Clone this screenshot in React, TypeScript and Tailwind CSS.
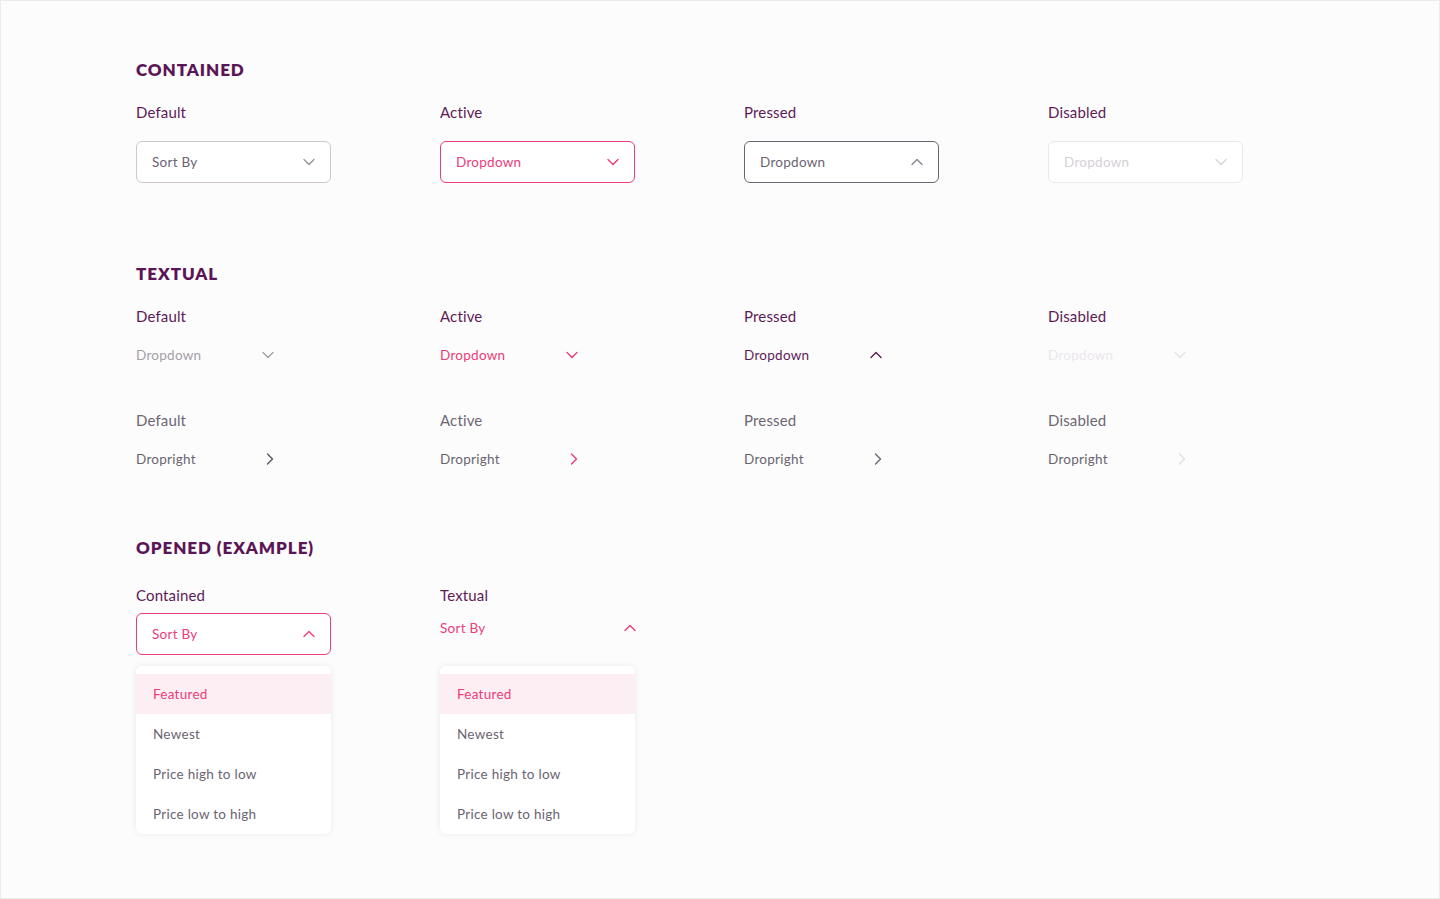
import React from "react";

const FONT = { fontFamily: "Lato, 'Open Sans', sans-serif" };

type ChevronDir = "down" | "up" | "right";

const Chevron: React.FC<{ dir: ChevronDir; className?: string }> = ({ dir, className }) => {
  const d =
    dir === "down" ? "M1 1.5l5 5 5-5" : dir === "up" ? "M1 6.5l5-5 5 5" : "M1.5 1l5 5-5 5";
  const w = dir === "right" ? 8 : 12;
  const h = dir === "right" ? 12 : 8;
  return (
    <svg width={w} height={h} viewBox={`0 0 ${w} ${h}`} fill="none" className={className}>
      <path d={d} stroke="currentColor" strokeWidth="1.4" strokeLinecap="round" strokeLinejoin="round" />
    </svg>
  );
};

const SectionTitle: React.FC<{ children: React.ReactNode }> = ({ children }) => (
  <h2 className="text-[17px] leading-6 font-extrabold tracking-[0.055em] text-[#5b1557]">{children}</h2>
);

const Label: React.FC<{ children: React.ReactNode; muted?: boolean }> = ({ children, muted }) => (
  <div className={`text-[15px] leading-5 tracking-[0.01em] ${muted ? "text-[#6e6673]" : "text-[#5e1a57]"}`}>
    {children}
  </div>
);

interface BoxProps {
  text: string;
  state: "default" | "active" | "pressed" | "disabled";
  open?: boolean;
}

const ContainedBox: React.FC<BoxProps> = ({ text, state, open }) => {
  const styles = {
    default: "border-[#cfc6d0] text-[#6b6470]",
    active: "border-[#ec3c7a] text-[#ec3c7a]",
    pressed: "border-[#6b6470] text-[#6b6470]",
    disabled: "border-[#ebe8ec] text-[#d5d0d7]",
  }[state];
  const chevronColor = {
    default: "text-[#9b939e]",
    active: "text-[#ec3c7a]",
    pressed: "text-[#8c8490]",
    disabled: "text-[#d9d4db]",
  }[state];
  return (
    <div
      className={`flex h-[42px] w-[195px] items-center justify-between rounded-[6px] border bg-white pl-[15px] pr-[15px] text-[13.5px] tracking-[0.02em] ${styles}`}
    >
      <span>{text}</span>
      <Chevron dir={state === "pressed" || open ? "up" : "down"} className={chevronColor} />
    </div>
  );
};

const TextualRow: React.FC<{ text: string; dir: ChevronDir; textColor: string; iconColor: string; width?: string }> = ({
  text,
  dir,
  textColor,
  iconColor,
  width = "w-[138px]",
}) => (
  <div className={`flex h-5 items-center justify-between text-[13.5px] tracking-[0.02em] ${width}`}>
    <span className={textColor}>{text}</span>
    <Chevron dir={dir} className={iconColor} />
  </div>
);

const Menu: React.FC = () => {
  const items = ["Featured", "Newest", "Price high to low", "Price low to high"];
  return (
    <div className="w-[195px] overflow-hidden rounded-[6px] bg-white pt-2 shadow-[0_0_6px_rgba(0,0,0,0.08)]">
      {items.map((item, i) => (
        <div
          key={item}
          className={`flex h-10 items-center pl-[17px] text-[13.5px] tracking-[0.02em] ${
            i === 0 ? "bg-[#fdeef3] text-[#ec3c7a]" : "text-[#6b6470]"
          }`}
        >
          {item}
        </div>
      ))}
    </div>
  );
};

export default function App() {
  return (
    <div
      style={FONT}
      className="min-h-[899px] w-[1440px] border border-[#ececec] bg-[#fcfcfc] pl-[135px] pt-[57px]"
    >
      <SectionTitle>CONTAINED</SectionTitle>
      <div className="mt-5 grid grid-cols-[304px_304px_304px_304px]">
        {(
          [
            ["Default", "Sort By", "default"],
            ["Active", "Dropdown", "active"],
            ["Pressed", "Dropdown", "pressed"],
            ["Disabled", "Dropdown", "disabled"],
          ] as const
        ).map(([label, text, state]) => (
          <div key={label} className="flex flex-col gap-[19px]">
            <Label>{label}</Label>
            <ContainedBox text={text} state={state} />
          </div>
        ))}
      </div>

      <div className="mt-[79px]">
        <SectionTitle>TEXTUAL</SectionTitle>
      </div>
      <div className="mt-5 grid grid-cols-[304px_304px_304px_304px]">
        <div className="flex flex-col gap-[19px]">
          <Label>Default</Label>
          <TextualRow text="Dropdown" dir="down" textColor="text-[#a59ea8]" iconColor="text-[#a59ea8]" />
        </div>
        <div className="flex flex-col gap-[19px]">
          <Label>Active</Label>
          <TextualRow text="Dropdown" dir="down" textColor="text-[#ec3c7a]" iconColor="text-[#ec3c7a]" />
        </div>
        <div className="flex flex-col gap-[19px]">
          <Label>Pressed</Label>
          <TextualRow text="Dropdown" dir="up" textColor="text-[#5e1a57]" iconColor="text-[#5e1a57]" />
        </div>
        <div className="flex flex-col gap-[19px]">
          <Label>Disabled</Label>
          <TextualRow text="Dropdown" dir="down" textColor="text-[#ebe7ec]" iconColor="text-[#e6e2e7]" />
        </div>
      </div>
      <div className="mt-[45px] grid grid-cols-[304px_304px_304px_304px]">
        <div className="flex flex-col gap-[19px]">
          <Label muted>Default</Label>
          <TextualRow text="Dropright" dir="right" textColor="text-[#6b6470]" iconColor="text-[#5c5460]" />
        </div>
        <div className="flex flex-col gap-[19px]">
          <Label muted>Active</Label>
          <TextualRow text="Dropright" dir="right" textColor="text-[#6b6470]" iconColor="text-[#ec3c7a]" />
        </div>
        <div className="flex flex-col gap-[19px]">
          <Label muted>Pressed</Label>
          <TextualRow text="Dropright" dir="right" textColor="text-[#6b6470]" iconColor="text-[#6b6470]" />
        </div>
        <div className="flex flex-col gap-[19px]">
          <Label muted>Disabled</Label>
          <TextualRow text="Dropright" dir="right" textColor="text-[#6b6470]" iconColor="text-[#e2dee3]" />
        </div>
      </div>

      <div className="mt-[67px]">
        <SectionTitle>OPENED (EXAMPLE)</SectionTitle>
      </div>
      <div className="mt-[25px] grid grid-cols-[304px_304px]">
        <div className="flex flex-col">
          <Label>Contained</Label>
          <div className="mt-2">
            <ContainedBox text="Sort By" state="active" open />
          </div>
          <div className="mt-[11px]">
            <Menu />
          </div>
        </div>
        <div className="flex flex-col">
          <Label>Textual</Label>
          <div className="mt-[13px]">
            <TextualRow
              text="Sort By"
              dir="up"
              textColor="text-[#ec3c7a]"
              iconColor="text-[#ec3c7a]"
              width="w-[196px]"
            />
          </div>
          <div className="mt-[28px]">
            <Menu />
          </div>
        </div>
      </div>
    </div>
  );
}
